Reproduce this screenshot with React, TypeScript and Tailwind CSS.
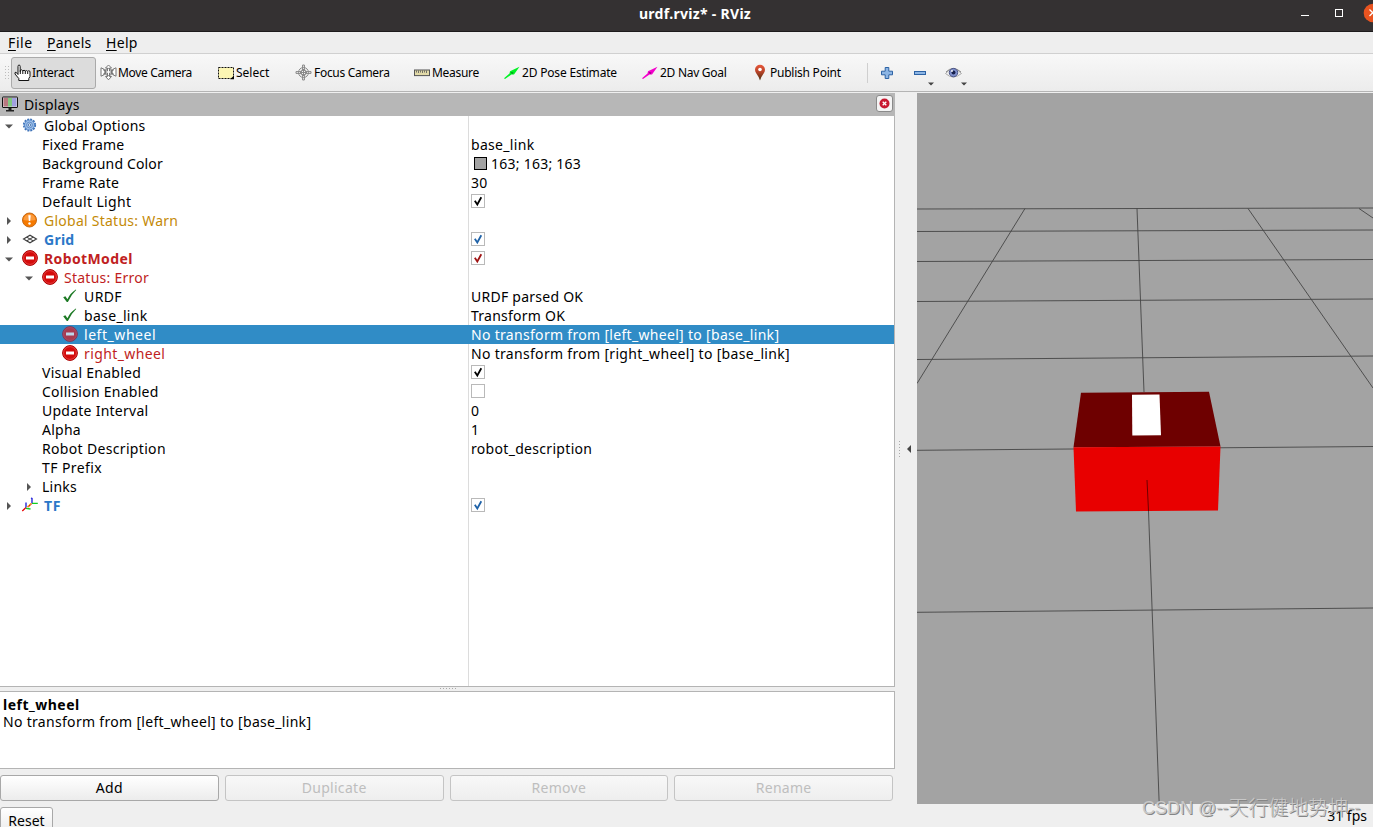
import React from 'react';

type IconName = 'gear' | 'warn' | 'grid' | 'error' | 'ok' | 'tf';

interface TreeRow {
  label: string;
  indent: string;
  arrow?: 'open' | 'closed';
  icon?: IconName;
  labelClass?: string;
  value?: string;
  swatch?: boolean;
  check?: string;
  selected?: boolean;
}

const rows: TreeRow[] = [
  { label: 'Global Options', indent: 'pl-1', arrow: 'open', icon: 'gear' },
  { label: 'Fixed Frame', indent: 'pl-[42px]', value: 'base_link' },
  { label: 'Background Color', indent: 'pl-[42px]', labelClass: 'tracking-[0.15px]', value: '163; 163; 163', swatch: true },
  { label: 'Frame Rate', indent: 'pl-[42px]', value: '30' },
  { label: 'Default Light', indent: 'pl-[42px]', labelClass: 'tracking-[0.33px]', check: '#000000' },
  { label: 'Global Status: Warn', indent: 'pl-1', arrow: 'closed', icon: 'warn', labelClass: 'text-[#c48a08]' },
  { label: 'Grid', indent: 'pl-1', arrow: 'closed', icon: 'grid', labelClass: 'font-bold text-[#2b78c8]', check: '#1f62a8' },
  { label: 'RobotModel', indent: 'pl-1', arrow: 'open', icon: 'error', labelClass: 'font-bold tracking-[0.38px] text-[#c01e22]', check: '#a01414' },
  { label: 'Status: Error', indent: 'pl-6', arrow: 'open', icon: 'error', labelClass: 'text-[#c01e22]' },
  { label: 'URDF', indent: 'pl-[60px]', icon: 'ok', labelClass: 'tracking-[0.4px]', value: 'URDF parsed OK' },
  { label: 'base_link', indent: 'pl-[60px]', icon: 'ok', labelClass: 'tracking-[0.33px]', value: 'Transform OK' },
  { label: 'left_wheel', indent: 'pl-[60px]', icon: 'error', labelClass: 'tracking-[0.55px]', value: 'No transform from [left_wheel] to [base_link]', selected: true },
  { label: 'right_wheel', indent: 'pl-[60px]', icon: 'error', labelClass: 'tracking-[0.4px] text-[#c01e22]', value: 'No transform from [right_wheel] to [base_link]' },
  { label: 'Visual Enabled', indent: 'pl-[42px]', check: '#000000' },
  { label: 'Collision Enabled', indent: 'pl-[42px]', check: 'none' },
  { label: 'Update Interval', indent: 'pl-[42px]', value: '0' },
  { label: 'Alpha', indent: 'pl-[42px]', value: '1' },
  { label: 'Robot Description', indent: 'pl-[42px]', labelClass: 'tracking-[0.33px]', value: 'robot_description' },
  { label: 'TF Prefix', indent: 'pl-[42px]', labelClass: 'tracking-[0.4px]' },
  { label: 'Links', indent: 'pl-6', arrow: 'closed' },
  { label: 'TF', indent: 'pl-1', arrow: 'closed', icon: 'tf', labelClass: 'font-bold tracking-[0.6px] text-[#2b78c8]', check: '#1f62a8' }
];

const RowIcon = ({ name, dim }: { name: IconName; dim?: boolean }) => {
  switch (name) {
    case 'gear':
      return (
        <svg width="20" height="18" viewBox="0 0 20 18">
          <circle cx="9.5" cy="8" r="5.6" fill="none" stroke="#3f73b8" strokeWidth="2" strokeDasharray="1.9 1.03" />
          <circle cx="9.5" cy="8" r="5" fill="#9dbfe8" stroke="#4a7fc4" strokeWidth="0.8" />
          <circle cx="9.5" cy="8" r="2.9" fill="#b4cdec" stroke="#4a7fc4" strokeWidth="0.8" />
          <circle cx="9.5" cy="8" r="1.2" fill="#fff" stroke="#3465a4" strokeWidth="0.8" />
        </svg>
      );
    case 'warn':
      return (
        <svg width="20" height="18" viewBox="0 0 20 18">
          <circle cx="9.5" cy="8" r="7" fill="#f57900" stroke="#c66a16" />
          <path d="M3.5 8a6 6 0 0 1 12 0Q9.5 9 3.5 8Z" fill="#fb9a3c" />
          <path d="M8.3 3.3h2.4L10.2 9H8.8Z" fill="#fff" />
          <circle cx="9.5" cy="11.5" r="1.2" fill="#fff" />
        </svg>
      );
    case 'grid':
      return (
        <svg width="20" height="18" viewBox="0 0 20 18" fill="none" stroke="#3d3d3d" strokeWidth="1.1">
          <path d="M3.5 8L10 4.2L16.5 8L10 11.8Z" />
          <path d="M6.7 6.1L13.2 9.9M13.2 6.1L6.7 9.9" />
        </svg>
      );
    case 'error':
      return (
        <svg width="20" height="18" viewBox="0 0 20 18">
          <circle cx="10" cy="8" r="7.4" fill={dim ? '#a73a50' : '#d40b0b'} stroke={dim ? '#7b3a5c' : '#a90000'} />
          <circle cx="10" cy="8" r="6.4" fill="none" stroke={dim ? '#a9536c' : '#ee5555'} strokeWidth="0.7" />
          <rect x="6" y="6.5" width="8" height="3" fill={dim ? '#bcd6ea' : '#fff'} />
        </svg>
      );
    case 'ok':
      return (
        <svg width="20" height="18" viewBox="0 0 20 18">
          <path d="M3.2 9.3L5.4 8.2L7.4 11.2Q10.5 5 15.8 1.6L16.2 2.1Q11 7 7.9 14H6.8Z" fill="#1d7a25" />
        </svg>
      );
    case 'tf':
      return (
        <svg width="20" height="18" viewBox="0 0 20 18" fill="none" strokeWidth="1.3">
          <path d="M6 10.5L2.3 14M11.5 6.5L8 10" stroke="#e80000" />
          <path d="M6 10.5V5.5M12 6V1.5L11 1" stroke="#1616d8" />
          <path d="M6 11.3L10.5 12M12 6.3H17.8" stroke="#10cf20" />
          <path d="M7.2 10L11 6.6" stroke="#e8b010" strokeDasharray="2 1" />
        </svg>
      );
  }
};

const Arrow = ({ kind }: { kind?: 'open' | 'closed' }) => (
  <svg width="10" height="10" viewBox="0 0 10 10" fill="#555" className="shrink-0">
    {kind === 'open' && <path d="M1 3.5H9L5 7.5Z" />}
    {kind === 'closed' && <path d="M3 1L7 5L3 9Z" />}
  </svg>
);

const CheckBox = ({ color }: { color: string }) => (
  <span className="mb-px flex h-3.5 w-3.5 border border-[#b9b9b9] bg-white">
    <svg width="12" height="12" viewBox="0 0 12 12">
      <path d="M2.8 5.8L5.3 9.5L9.3 2.2" fill="none" stroke={color} strokeWidth="1.8" />
    </svg>
  </span>
);

const HandIcon = () => (
  <svg width="17" height="18" viewBox="0 0 17 18" fill="#fff" stroke="#111" strokeWidth="1" className="shrink-0">
    <path d="M4 10.5V2.5Q4 1 5 1Q6.2 1 6.2 2.5V7.5V6.5Q7.6 5 8.8 6.8Q10 5.6 11.5 7Q12.7 6 13.8 7.4L14.5 6.8Q16 6.5 16 8V12.5L14.8 14.5V16.5H4.8V14.5L1 10Q.6 8 2 8.2Z" />
    <path d="M6.3 7V10M8.8 7V10M11.3 7V10M13.7 7.5V10" />
  </svg>
);

const MoveIcon = () => (
  <svg width="17" height="17" viewBox="0 0 17 17" fill="#fff" stroke="#777" strokeWidth="1">
    <path d="M8.5 1L11.5 4H9.5V7H12.5V5.5L16 3.8V12.2L12.5 10.5V9H9.5V12.5H11.5L8.5 15.8L5.5 12.5H7.5V9H4.5V10.5L1 12.2V3.8L4.5 5.5V7H7.5V4H5.5Z" />
    <path d="M3 5.5L6 8L3 10.5M14 5.5L11 8L14 10.5" fill="none" />
    <circle cx="8.5" cy="8" r="3.6" fill="none" />
  </svg>
);

const SelectIcon = () => (
  <svg width="17" height="14" viewBox="0 0 17 14">
    <rect x="0.5" y="1.5" width="15" height="11" fill="#fcf6b4" stroke="#111" strokeDasharray="2 1" />
    <path d="M16 9.5V13.2H12.2Z" fill="#000" />
  </svg>
);

const FocusIcon = () => (
  <svg width="17" height="17" viewBox="0 0 17 17" fill="none" stroke="#888" strokeWidth="1">
    <circle cx="8.5" cy="8.5" r="5" />
    <circle cx="8.5" cy="8.5" r="2.8" />
    <path d="M7.6 7V1H9.4V7M7.6 10V16H9.4V10M7 7.6H1V9.4H7M10 7.6H16V9.4H10M8.5 5V12M5 8.5H12" />
  </svg>
);

const MeasureIcon = () => (
  <svg width="17" height="8" viewBox="0 0 17 8">
    <rect x="0.5" y="1" width="15" height="5.6" fill="#e2daa8" stroke="#555" />
    <path d="M2.5 1.5V3.5M4.5 1.5V4M6.5 1.5V3.5M8.5 1.5V4M10.5 1.5V3.5M12.5 1.5V4" stroke="#555" strokeWidth="0.8" />
  </svg>
);

const PoseArrow = ({ color }: { color: string }) => (
  <svg width="16" height="14" viewBox="0 0 16 14">
    <path d="M0 12.2L5.5 7.6L6 5.2L15.5 .8L10 8.4L7.5 8.6L1 13Z" fill={color} />
    <path d="M6.5 6L9.5 6.5L8.2 8.2Z" fill="#000" opacity="0.4" />
  </svg>
);

const PinIcon = () => (
  <svg width="16" height="17" viewBox="0 0 16 17">
    <defs>
      <linearGradient id="pin" x1="0" y1="0" x2="0" y2="1">
        <stop offset="0" stopColor="#e8573a" />
        <stop offset="0.45" stopColor="#b8442a" />
        <stop offset="1" stopColor="#4a3010" />
      </linearGradient>
    </defs>
    <path d="M8 16.5Q7 13 4.5 9.8Q3 7.5 3 5.7A5 5 0 0 1 13 5.7Q13 7.5 11.5 9.8Q9 13 8 16.5Z" fill="url(#pin)" />
    <circle cx="8" cy="5.5" r="1.8" fill="#fff" />
  </svg>
);

const tools = [
  { label: 'Move Camera', icon: <MoveIcon />, width: 'w-[118px]', gap: 'gap-px', tracking: 'tracking-[-0.33px]' },
  { label: 'Select', icon: <SelectIcon />, width: 'w-[77px]', gap: 'gap-px', tracking: 'tracking-normal' },
  { label: 'Focus Camera', icon: <FocusIcon />, width: 'w-[119px]', gap: 'gap-0.5', tracking: 'tracking-[-0.3px]' },
  { label: 'Measure', icon: <MeasureIcon />, width: 'w-[90px]', gap: 'gap-px', tracking: 'tracking-[-0.3px]' },
  { label: '2D Pose Estimate', icon: <PoseArrow color="#00f224" />, width: 'w-[138px]', gap: 'gap-0.5', tracking: 'tracking-[-0.18px]' },
  { label: '2D Nav Goal', icon: <PoseArrow color="#f400cc" />, width: 'w-[110px]', gap: 'gap-0.5', tracking: 'tracking-[-0.28px]' },
  { label: 'Publish Point', icon: <PinIcon />, width: 'w-[115px]', gap: 'gap-0.5', tracking: 'tracking-[-0.24px]' }
];

const TitleBar = () => (
  <header className="flex h-8 shrink-0 items-center justify-end border-b border-[#1d1b1c] bg-[#343132]">
    <div className="flex-1 pb-1 pl-[17px] text-center text-[14px] font-bold tracking-[0.3px] text-white">urdf.rviz* - RViz</div>
    <svg width="73" height="31" viewBox="0 0 73 31" className="-ml-[73px]">
      <path d="M1 15.5H9" stroke="#fff" />
      <rect x="35.5" y="9.5" width="7" height="7" fill="none" stroke="#fff" />
      <circle cx="73" cy="13" r="9.3" fill="#e95420" />
      <path d="M69.5 9.5L76 16M69.5 16L76 9.5" stroke="#fff" strokeWidth="1.3" />
    </svg>
  </header>
);

const MenuBar = () => (
  <nav className="flex h-[22px] shrink-0 items-center gap-[14px] border-b border-[#d0d0d0] bg-[#eeeeee] pl-2 text-[14px]">
    <span className="w-[25px] tracking-[0.6px]"><u className="underline-offset-2">F</u>ile</span>
    <span className="w-[45px] tracking-[0.2px]"><u className="underline-offset-2">P</u>anels</span>
    <span className="tracking-[0.3px]"><u className="underline-offset-2">H</u>elp</span>
  </nav>
);

const ToolBar = () => (
  <div className="flex h-[38px] shrink-0 items-center border-b border-[#b4b4b4] bg-linear-to-b from-[#f8f8f8] to-[#ececec] text-[12px]">
    <div className="ml-1 h-4 w-[7px] bg-[radial-gradient(#bdbdbd_0.7px,transparent_1px)] bg-size-[3px_3px]" />
    <div className="flex h-8 w-[85px] items-center gap-px rounded-[3px] border border-[#aaaaaa] bg-[#dcdcdc] pl-[2px]">
      <HandIcon />
      <span className="tracking-[-0.25px] whitespace-nowrap">Interact</span>
    </div>
    <div className="flex items-center pl-1">
      {tools.map((tool) => (
        <div key={tool.label} className={`flex items-center whitespace-nowrap ${tool.width} ${tool.gap} ${tool.tracking}`}>
          {tool.icon}
          <span>{tool.label}</span>
        </div>
      ))}
    </div>
    <div className="h-5 w-px bg-[#cfcfcf]" />
    <svg width="105" height="30" viewBox="0 0 105 30">
      <path d="M17.2 9.5H20.8V13.2H24.5V16.8H20.8V20.5H17.2V16.8H13.5V13.2H17.2Z" fill="#8cb5e4" stroke="#2c62a4" />
      <rect x="46.5" y="13.5" width="11" height="3" fill="#8cb5e4" stroke="#2c62a4" />
      <path d="M60 24.5H66L63 27.5ZM93 24.5H99L96 27.5Z" fill="#444" />
      <path d="M77.5 15.5Q85 6 93.5 15.5Q85 22.5 77.5 15.5Z" fill="#efefef" stroke="#aaa" />
      <path d="M78 14Q85 7 93 14" fill="none" stroke="#888" />
      <circle cx="85.5" cy="14.6" r="4.2" fill="#8090cc" stroke="#4a5488" />
      <circle cx="85.5" cy="14.6" r="2" fill="#16204c" />
      <circle cx="84" cy="13" r="0.9" fill="#fff" />
    </svg>
  </div>
);

const DisplaysTree = () => (
  <div className="h-[571px] border-r border-b border-[#b4b4b4] bg-white bg-[linear-gradient(#dcdcdc,#dcdcdc)] bg-size-[1px_100%] bg-position-[468px_0] bg-no-repeat">
    {rows.map((row) => (
      <div key={row.label} className={`flex h-[19px] items-center tracking-[0.25px] whitespace-nowrap ${row.selected ? 'bg-[#308cc6] text-white' : ''}`}>
        <div className={`flex w-[471px] items-center ${row.indent}`}>
          {row.arrow && <Arrow kind={row.arrow} />}
          {row.icon && (
            <span className={row.arrow ? 'ml-1.5 w-6' : 'w-6'}>
              <RowIcon name={row.icon} dim={row.selected} />
            </span>
          )}
          <span className={`${row.arrow && !row.icon ? 'pl-2' : ''} ${row.labelClass ?? ''}`}>{row.label}</span>
        </div>
        {row.swatch && <span className="mr-1 ml-[3px] h-[13px] w-[13px] border border-black bg-[#a3a3a3]" />}
        {row.value && <span className={row.value.includes('_') ? 'tracking-[0.31px]' : ''}>{row.value}</span>}
        {row.check && <CheckBox color={row.check} />}
      </div>
    ))}
  </div>
);

const DisplaysPanel = () => (
  <aside className="flex w-[895px] flex-col">
    <div className="flex h-[23px] items-center bg-[#b7b7b7] pl-0.5">
      <svg width="17" height="17" viewBox="0 0 17 17">
        <rect x="0.5" y="1" width="15" height="10.5" rx="0.5" fill="#ddd" stroke="#111" />
        <rect x="1.5" y="2" width="4.5" height="8.5" fill="#b87880" />
        <rect x="6" y="2" width="4" height="8.5" fill="#82c882" />
        <rect x="10" y="2" width="4.5" height="8.5" fill="#a0a0e0" />
        <path d="M6.5 12H9.5V14H12V15.5H4V14H6.5Z" fill="#222" />
      </svg>
      <span className="flex-1 pl-[5px] tracking-[0.15px]">Displays</span>
      <span className="mr-[2px] mb-0.5 flex h-[17px] w-[17px] items-center justify-center rounded-[3px] border border-[#8a8a8a] bg-[#f4f4f4]">
        <svg width="11" height="11" viewBox="0 0 11 11">
          <circle cx="5.5" cy="5.5" r="5" fill="#c81830" />
          <path d="M3.7 3.7L7.3 7.3M7.3 3.7L3.7 7.3" stroke="#fff" strokeWidth="1.3" />
        </svg>
      </span>
    </div>
    <DisplaysTree />
    <div className="flex h-1 justify-center">
      <span className="h-[3px] w-[18px] bg-[radial-gradient(#aaa_0.7px,transparent_1px)] bg-size-[3px_3px]" />
    </div>
    <div className="h-[78px] border border-l-0 border-[#b4b4b4] bg-white pt-1 pl-[3px] leading-[17px]">
      <p className="font-bold tracking-[0.5px]">left_wheel</p>
      <p className="tracking-[0.31px]">No transform from [left_wheel] to [base_link]</p>
    </div>
    <div className="grid grid-cols-4 gap-1.5 pt-1.5 pr-0.5 text-center leading-6 tracking-[0.3px]">
      <button className="h-[26px] rounded-[3px] border border-[#a8a8a8] bg-linear-to-b from-white to-[#ececec]">Add</button>
      {['Duplicate', 'Remove', 'Rename'].map((label) => (
        <button key={label} disabled className="h-[26px] rounded-[3px] border border-[#c4c4c4] bg-linear-to-b from-[#f8f8f8] to-[#eeeeee] text-[#bebebe]">
          {label}
        </button>
      ))}
    </div>
  </aside>
);

const RobotView = () => (
  <svg width="456" height="711" viewBox="917 93 456 711" className="bg-[#a3a3a3]">
    <g stroke="#454545" strokeWidth="0.9" fill="none">
      <path d="M917 209L1373 208M917 231.5L1373 230M917 261.5L1373 259.5M917 301.5L1373 299M917 359.5L1373 356M917 450.3L1373 446.5M917 612.3L1373 608" />
      <path d="M1025 208.5L917 383.5M1137 208.5L1144 392M1248 208.5L1373 388M1359 208.5L1373 218" />
    </g>
    <path d="M1081 392.7L1209 391.8L1220.5 446.5L1073.5 447.3Z" fill="#6e0000" />
    <path d="M1073.5 447.3L1220.5 446.5L1218 510.5L1076 511.5Z" fill="#e80000" />
    <path d="M1132 394.8L1159.5 394.5L1161 435.2L1132.3 435.5Z" fill="#fff" />
    <path d="M1147 480L1148.5 511" stroke="#6e0000" />
    <path d="M1148.5 511L1159.2 804" stroke="#454545" strokeWidth="0.9" />
  </svg>
);

export default function App() {
  return (
    <div className="relative flex h-[827px] w-[1373px] flex-col overflow-hidden bg-[#efefef] font-['Noto_Sans','Noto_Sans_CJK_SC',sans-serif] text-[14px] text-black">
      <TitleBar />
      <MenuBar />
      <ToolBar />
      <main className="mt-px flex h-[711px] shrink-0">
        <DisplaysPanel />
        <div className="flex w-[22px] items-center pl-[3px]">
          <span className="h-[17px] w-[3px] bg-[radial-gradient(#aaa_0.7px,transparent_1px)] bg-size-[3px_3px]" />
          <svg width="8" height="10" viewBox="0 0 8 10" className="ml-[4px]">
            <path d="M6 1V9L2 5Z" fill="#444" />
          </svg>
        </div>
        <RobotView />
      </main>
      <footer className="flex h-[23px] shrink-0 items-start justify-between overflow-hidden pt-[3px] pr-1.5">
        <button className="h-[26px] w-[53px] rounded-[3px] border border-[#a8a8a8] bg-linear-to-b from-white to-[#ececec]">Reset</button>
        <span className="leading-[18px]">31 fps</span>
      </footer>
      <div className="absolute top-[796px] left-[1142px] flex text-[20px] leading-6 whitespace-nowrap text-[#c8c8c8] [text-shadow:1px_1px_0_#858585] font-['Liberation_Sans','Noto_Sans_CJK_SC',sans-serif]">
        <span className="text-[18px]">CSDN @--</span>
        <span className="font-light">天行健地势坤</span>
        <span className="text-[18px]">--</span>
      </div>
    </div>
  );
}
